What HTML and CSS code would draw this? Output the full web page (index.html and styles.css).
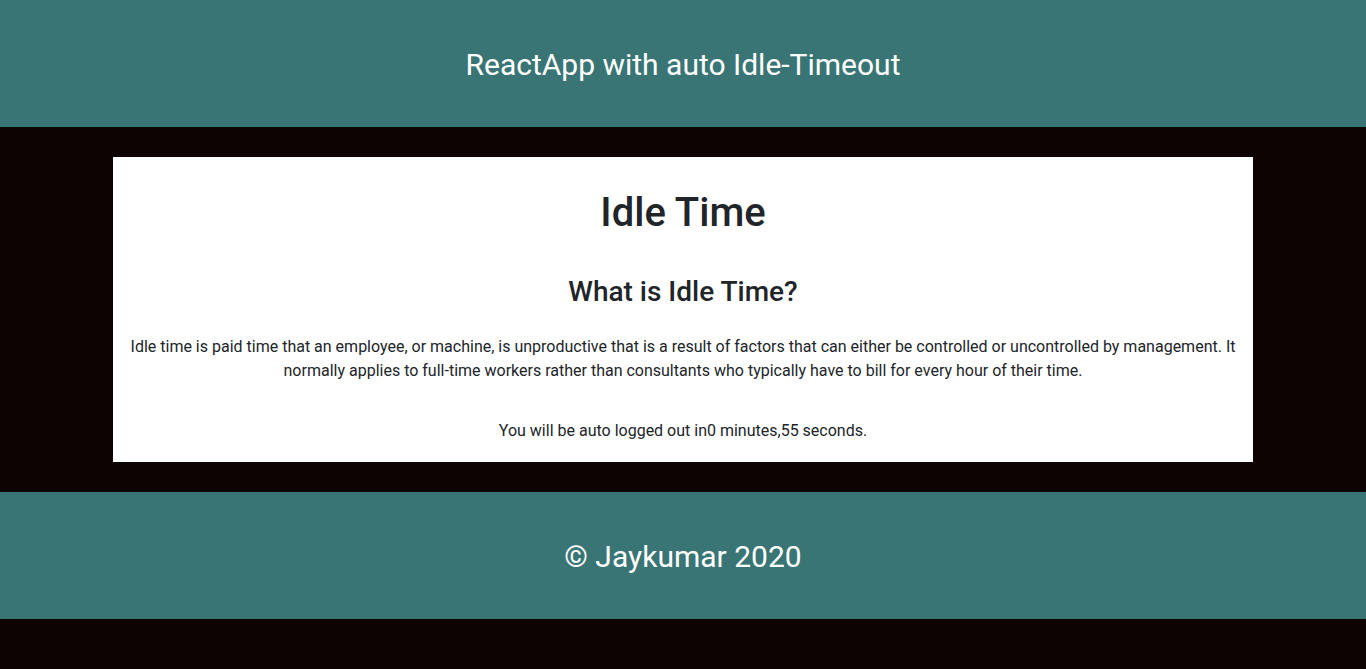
FILE: index.html
```html
<!DOCTYPE html>
<html>
<head>
<meta charset="utf-8">
<link rel="stylesheet" href="styles.css">
</head>
<body>
<header class="top-bar">
  <h3 class="app-title">ReactApp with auto Idle-Timeout</h3>
</header>
<main class="main">
  <section class="card">
    <h1 class="card-title">Idle Time</h1>
    <h2 class="card-subtitle">What is Idle Time?</h2>
    <p class="card-text">Idle time is paid time that an employee, or machine, is unproductive that is a result of factors that can either be controlled or uncontrolled by management. It normally applies to full-time workers rather than consultants who typically have to bill for every hour of their time.</p>
    <p class="card-timer">You will be auto logged out in0 minutes,55 seconds.</p>
  </section>
</main>
<footer class="bottom-bar">
  <h3 class="footer-text">© Jaykumar 2020</h3>
</footer>
</body>
</html>
```
FILE: styles.css
```css
* { box-sizing: border-box; }
html, body {
  margin: 0;
  padding: 0;
}
body {
  background: #0e0303;
  font-family: Roboto, "Liberation Sans", sans-serif;
  color: #212529;
  min-height: 669px;
}
.top-bar, .bottom-bar {
  background: #3a7575;
  height: 127px;
  display: flex;
  align-items: center;
  justify-content: center;
}
.app-title {
  margin: 2px 0 0;
  color: #fff;
  font-weight: 400;
  font-size: 30px;
  line-height: 1.2;
}
.footer-text {
  margin: 2px 0 0;
  color: #fff;
  font-weight: 400;
  font-size: 30px;
  line-height: 1.2;
}
.main {
  padding: 30px 0;
}
.card {
  width: 1140px;
  margin: 0 auto;
  background: #fff;
  text-align: center;
  padding: 32px 15px 19px;
}
.card-title {
  margin: 0 0 38px;
  font-size: 40px;
  font-weight: 500;
  line-height: 48px;
}
.card-subtitle {
  margin: 0 0 26px;
  font-size: 28px;
  font-weight: 500;
  line-height: 34px;
}
.card-text {
  margin: 0 0 36px;
  font-size: 16px;
  line-height: 24px;
}
.card-timer {
  margin: 0;
  font-size: 16px;
  line-height: 24px;
}
```
